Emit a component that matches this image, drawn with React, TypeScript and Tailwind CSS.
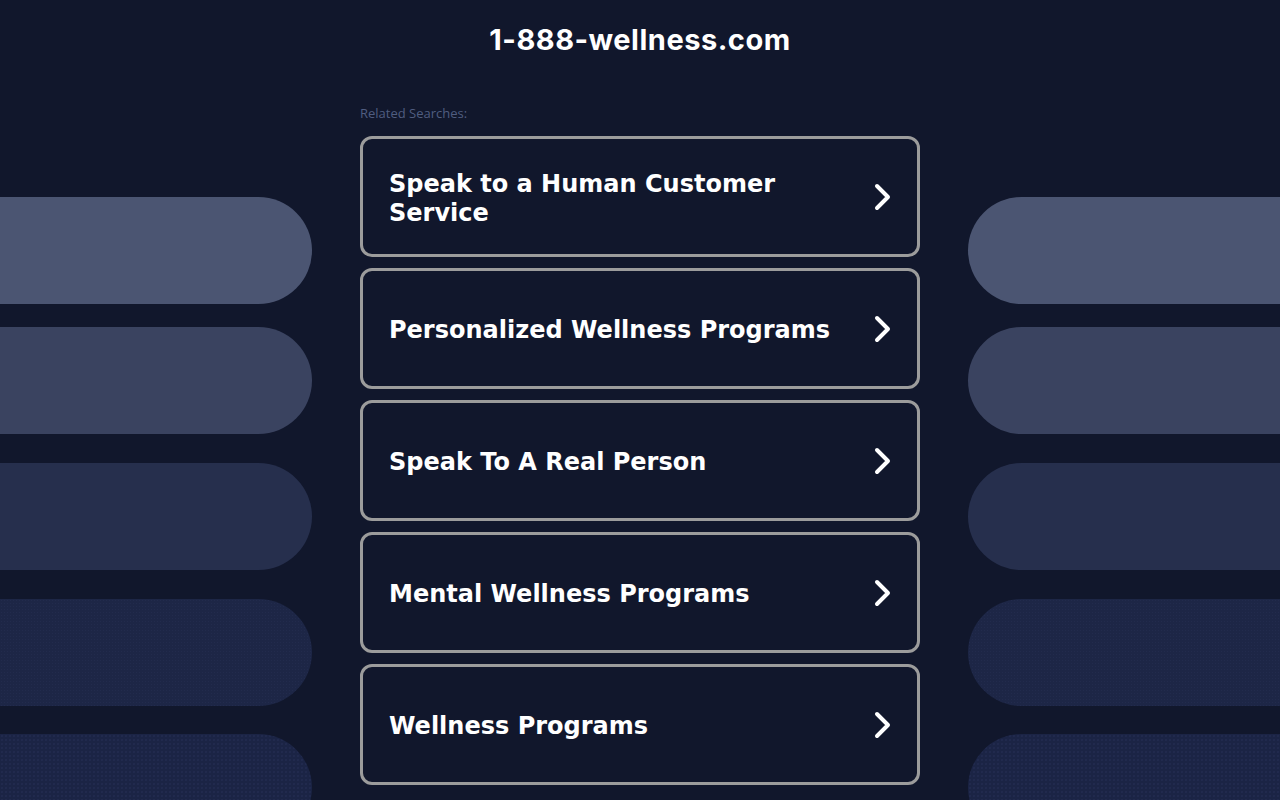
const pillColors = [
  'bg-[#4b5572] mt-[197px]',
  'bg-[#3a4360] mt-[23px]',
  'bg-[#262f4d] mt-[29px]',
  'bg-[#1d2646] mt-[29px] bg-[radial-gradient(#222b4d_0.6px,transparent_0.8px)] bg-[length:3px_3px]',
  'bg-[#1b2445] mt-[28px] bg-[radial-gradient(#212a4e_0.7px,transparent_0.9px)] bg-[length:4px_4px]',
];

const searches = [
  'Speak to a Human Customer Service',
  'Personalized Wellness Programs',
  'Speak To A Real Person',
  'Mental Wellness Programs',
  'Wellness Programs',
];

const Chevron = () => (
  <svg width="18" height="28" viewBox="0 0 18 28" fill="none" className="shrink-0">
    <path
      d="M3 3 L14 14 L3 25"
      stroke="white"
      strokeWidth="4"
      strokeLinecap="round"
      strokeLinejoin="round"
    />
  </svg>
);

const PillColumn = ({ side }: { side: 'left' | 'right' }) => (
  <div className="flex flex-col w-[312px] shrink-0">
    {pillColors.map((c, i) => (
      <div
        key={i}
        className={`h-[107px] w-full shrink-0 ${c} ${
          side === 'left' ? 'rounded-r-[54px]' : 'rounded-l-[54px]'
        }`}
      />
    ))}
  </div>
);

const SearchCard = ({ label }: { label: string }) => (
  <a
    href="#"
    className="flex items-center justify-between h-[121px] border-[3px] border-[#9c9c9c] rounded-[12px] pl-[26px] pr-[25px] bg-[#11172c]"
  >
    <span
      className="text-white font-bold text-[24px] leading-[29px] pr-10 pt-[4px]"
      style={{ fontFamily: '"DejaVu Sans", Verdana, sans-serif' }}
    >
      {label}
    </span>
    <Chevron />
  </a>
);

export default function App() {
  return (
    <div className="w-[1280px] h-[800px] overflow-hidden bg-[#11172c] flex flex-col">
      <header className="h-[80px] flex items-center justify-center shrink-0">
        <h1
          className="text-white font-bold text-[29px] tracking-[0.5px]"
          style={{ fontFamily: 'Inter, "Noto Sans", sans-serif' }}
        >
          1-888-wellness.com
        </h1>
      </header>
      <div className="flex gap-[48px] -mt-[80px]">
        <PillColumn side="left" />
        <main className="w-[560px] shrink-0 pt-[105px]">
          <p
            className="text-[13px] text-[#505d80] leading-[16px] mb-[15px]"
            style={{ fontFamily: '"Open Sans", Arial, sans-serif' }}
          >
            Related Searches:
          </p>
          <div className="flex flex-col gap-[11px]">
            {searches.map((s) => (
              <SearchCard key={s} label={s} />
            ))}
          </div>
        </main>
        <PillColumn side="right" />
      </div>
    </div>
  );
}
